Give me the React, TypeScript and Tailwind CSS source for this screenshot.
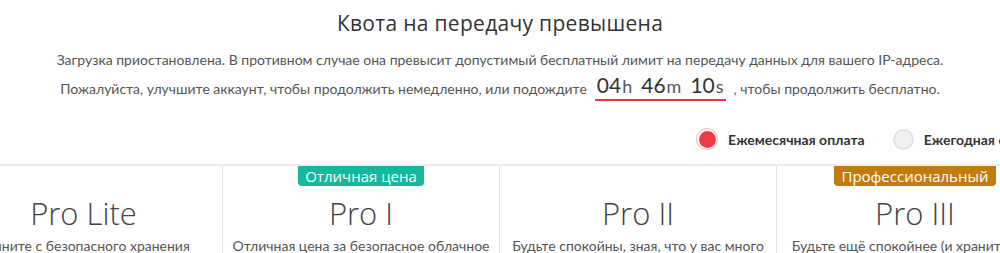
export default function App() {
  const plans = [
    { name: "Pro Lite", desc: "Начните с безопасного хранения", badge: "" },
    { name: "Pro I", desc: "Отличная цена за безопасное облачное", badge: "Отличная цена", color: "bg-[#14b89c]" },
    { name: "Pro II", desc: "Будьте спокойны, зная, что у вас много", badge: "" },
    { name: "Pro III", desc: "Будьте ещё спокойнее (и храните ещё", badge: "Профессиональный", color: "bg-[#c37b0c]" },
  ];
  return (
    <div className="w-[1000px] h-[253px] overflow-hidden bg-white font-['Lato',sans-serif] text-[#555]">
      <h1 className="pt-[10px] text-center text-[21px] leading-[26px] text-[#333] font-['Open_Sans',sans-serif] tracking-[0.3px]">
        Квота на передачу превышена
      </h1>
      <p className="mt-[14px] text-center text-[14px] leading-[20px]">
        Загрузка приостановлена. В противном случае она превысит допустимый бесплатный лимит на передачу данных для вашего IP-адреса.
      </p>
      <div className="mt-[3px] flex items-end justify-center text-[14px] leading-[20px]">
        <span className="mb-[2px]">Пожалуйста, улучшите аккаунт, чтобы продолжить немедленно, или подождите</span>
        <span className="mx-[8px] flex items-baseline gap-[9px] border-b-2 border-[#e8323c] px-[2px] pb-[1px] text-[#333]">
          <span><span className="text-[21px] leading-[24px]">04</span><span className="ml-[1px] text-[18px] text-[#555]">h</span></span>
          <span><span className="text-[21px] leading-[24px]">46</span><span className="ml-[1px] text-[18px] text-[#555]">m</span></span>
          <span><span className="text-[21px] leading-[24px]">10</span><span className="ml-[1px] text-[18px] text-[#555]">s</span></span>
        </span>
        <span className="mb-[2px]">, чтобы продолжить бесплатно.</span>
      </div>
      <div className="mt-[27px] flex justify-end gap-[28px] text-[14px] font-bold text-[#333] mr-[-44px]">
        <label className="flex items-center gap-[10px]">
          <span className="flex h-[22px] w-[22px] items-center justify-center rounded-full border border-[#f6b8bb] bg-white">
            <span className="h-[17px] w-[17px] rounded-full bg-[#ee3b47]"></span>
          </span>
          Ежемесячная оплата
        </label>
        <label className="flex items-center gap-[10px]">
          <span className="h-[21px] w-[21px] rounded-full border-2 border-[#e2e2e2] bg-[#f1f1f1]"></span>
          Ежегодная оплата
        </label>
      </div>
      <div className="mt-[14px] flex border-t-2 border-[#ececec] ml-[-55px]">
        {plans.map((p, i) => (
          <div key={i} className={`relative w-[277px] shrink-0 text-center ${i > 0 ? "border-l border-[#e4e4e4]" : ""}`}>
            <div className="h-[20px] flex justify-center">
              {p.badge && (
                <span className={`${p.color} rounded-b-[4px] px-[7px] text-[15px] leading-[20px] text-white font-['Open_Sans',sans-serif]`}>
                  {p.badge}
                </span>
              )}
            </div>
            <div className="mt-[9px] text-[31px] leading-[36px] font-light text-[#444] font-['Open_Sans',sans-serif]">{p.name}</div>
            <div className="mt-[5px] whitespace-nowrap text-[14px] leading-[20px]">{p.desc}</div>
          </div>
        ))}
      </div>
    </div>
  );
}
